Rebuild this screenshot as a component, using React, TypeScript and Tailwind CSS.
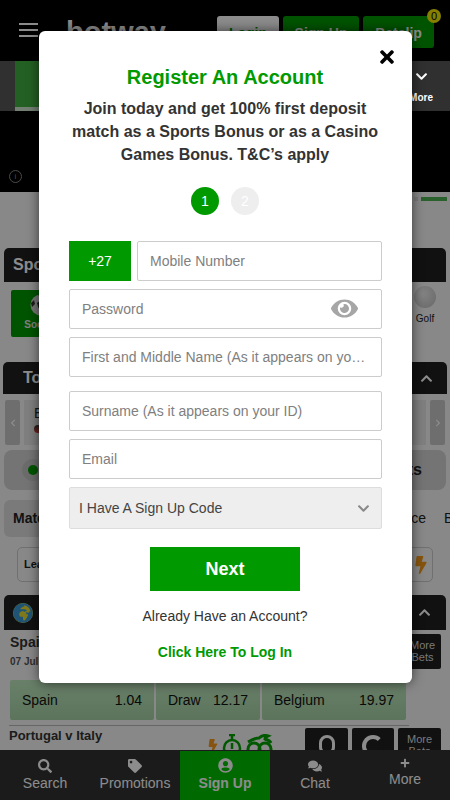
import { FaComments, FaEye, FaSearch, FaTag, FaTimes, FaUserCircle, FaGlobeAfrica, FaBolt, FaChevronLeft, FaChevronRight, FaChevronUp, FaChevronDown, FaPlus } from "react-icons/fa";

const OddsCell = ({ name, price, className }: { name: string; price: string; className: string }) => (
  <div className={`flex items-center justify-between h-[40px] px-[12px] rounded-[2px] bg-linear-to-b from-[#bfe8bf] to-[#a8d4a8] text-[14px] text-[#111] ${className}`}>
    <span>{name}</span>
    <span>{price}</span>
  </div>
);

const NavItem = ({ icon, label }: { icon: React.ReactNode; label: string }) => (
  <div className="flex-1 flex flex-col items-center justify-center text-white text-[14px] leading-[17px] gap-[2px]">
    <span className="h-[14px] text-[14px]">{icon}</span>
    <span>{label}</span>
  </div>
);

const fieldClass =
  "w-full h-[40px] border border-[#ccc] rounded-[2px] px-[12px] text-[14px] text-[#333] bg-white text-ellipsis outline-none placeholder:text-[#808080]";

export default function App() {
  return (
    <div className="relative w-[450px] h-[800px] overflow-hidden flex flex-col bg-[#f8f8f8] font-['Liberation_Sans',Arial,sans-serif]">
      {/* header */}
      <div className="h-[61px] shrink-0 bg-black flex items-start">
        <div className="w-[19px] ml-[19px] mt-[23px] flex flex-col gap-[4px]">
          <div className="h-[2px] bg-white" />
          <div className="h-[2px] bg-white" />
          <div className="h-[2px] bg-white" />
        </div>
        <div className="ml-[28px] mt-[15px] text-[29px] leading-[34px] font-bold text-white w-[115px]">botway</div>
        <div className="ml-[36px] mt-[16px] w-[62px] h-[32px] pt-[2px] rounded-[3px] bg-white text-[#009a00] font-bold text-[14px] flex items-center justify-center">Login</div>
        <div className="ml-[4px] mt-[16px] w-[76px] h-[32px] pt-[2px] rounded-[3px] bg-[#009a00] text-white font-bold text-[14px] flex items-center justify-center">Sign Up</div>
        <div className="relative ml-[4px] mt-[16px] w-[71px] h-[32px] pt-[2px] rounded-[3px] bg-[#009a00] text-white font-bold text-[14px] flex items-center justify-center">
          Betslip
          <span className="absolute -top-[7px] -right-[7px] w-[14px] h-[14px] rounded-full bg-[#f5e800] text-black text-[11px] leading-[14px] text-center font-normal">0</span>
        </div>
      </div>

      {/* sports strip */}
      <div className="h-[50px] shrink-0 bg-[#585858] flex">
        <div className="ml-[15px] w-[60px] flex flex-col">
          <div className="flex-1 bg-[#40b040]" />
          <div className="h-[4px] bg-[#cfe8cf]" />
        </div>
        <div className="relative z-10 ml-auto mr-[9px] w-[40px] flex flex-col items-center pt-[9px] text-white">
          <FaChevronDown className="text-[13px]" />
          <span className="text-[10px] font-bold mt-[7px]">More</span>
        </div>
      </div>

      {/* banner */}
      <div className="h-[81px] shrink-0 bg-black flex items-end px-[9px] pb-[9px]">
        <div className="w-[13px] h-[13px] rounded-full border border-[#888] flex items-center justify-center text-[8px] text-[#888]">i</div>
      </div>

      {/* page */}
      <div className="flex-1 min-h-0 overflow-hidden">
        <div className="h-[56px] flex justify-end items-start pr-[3px] pt-[5px] gap-[3px]">
          <div className="w-[4px] h-[4px] bg-[#e0e0e0]" />
          <div className="w-[26px] h-[4px] bg-[#4caf50]" />
        </div>

        {/* sports */}
        <div className="mx-[4px] h-[34px] rounded-t-[5px] bg-[#1f1f1f] text-white font-bold text-[16px] leading-[34px] pl-[9px]">Sports</div>
        <div className="h-[80px] pl-[11px] pr-[9px] pt-[8px] flex justify-between items-start">
          <div className="w-[60px] h-[47px] rounded-[2px] bg-[#009a00] flex flex-col items-center pt-[4px]">
            <svg width="22" height="22" viewBox="0 0 22 22">
              <circle cx="11" cy="11" r="10.5" fill="#d8d8d8" />
              <path d="M11 6l4 3-1.5 5h-5L7 9z" fill="#222" />
              <path d="M1 9l3-3 1 4-3 3zM8 1h6l-3 2z" fill="#333" />
            </svg>
            <span className="text-[10px] font-bold text-[#e8e8e8] mt-[1px]">Soccer</span>
          </div>
          <div className="w-[30px] flex flex-col items-center -mt-[4px] mr-[1px]">
            <div className="w-[22px] h-[22px] rounded-full bg-[radial-gradient(circle_at_40%_35%,#f0f0f0,#bdbdbd)]" />
            <span className="text-[10px] text-[#222] mt-[3px]">Golf</span>
          </div>
        </div>

        {/* top bets */}
        <div className="mx-[3px] h-[32px] rounded-t-[5px] bg-[#1f1f1f] flex items-center justify-between pl-[20px] pr-[14px] text-white">
          <span className="font-bold text-[16px]">Top Bets</span>
          <FaChevronUp className="text-[13px]" />
        </div>
        <div className="mx-[5px] mt-[6px] h-[45px] flex gap-[4px]">
          <div className="w-[15px] rounded-[2px] bg-[#c8c8c8] flex items-center justify-center text-white text-[8px]"><FaChevronLeft /></div>
          <div className="flex-1 bg-[#e8e8e8] pl-[10px] pt-[3px] text-[14px] text-[#222]">
            Euro 2020
            <div className="w-[8px] h-[8px] rounded-full bg-linear-to-b from-[#333] to-[#d83030] mt-[1px]" />
          </div>
          <div className="w-[15px] rounded-[2px] bg-[#c8c8c8] flex items-center justify-center text-white text-[8px]"><FaChevronRight /></div>
        </div>

        {/* live */}
        <div className="mx-[4px] mt-[5px] h-[40px] rounded-[8px] bg-[#d4d4d4] flex items-center justify-between pl-[18px] pr-[24px]">
          <div className="w-[22px] h-[22px] rounded-full bg-[#c4c4c4] flex items-center justify-center">
            <div className="w-[10px] h-[10px] rounded-full bg-[#009a00]" />
          </div>
          <span className="font-bold text-[16px] text-[#222]">Live Events</span>
        </div>

        {/* tabs */}
        <div className="ml-[4px] -mr-[10px] mt-[10px] h-[37px] flex items-center text-[14px] text-[#222]">
          <div className="w-[110px] h-[37px] rounded-[6px] bg-[#dedede] pl-[9px] leading-[37px] font-bold">Match Result</div>
          <span className="ml-auto">Price</span>
          <span className="ml-[18px] w-[16px]">Bet</span>
        </div>

        {/* league filter */}
        <div className="mx-[17px] mt-[10px] h-[35px] rounded-[5px] border border-[#ccc] flex items-center justify-between pl-[6px] pr-[2px] text-[11px] font-bold text-[#222]">
          <span>League</span>
          <FaBolt className="text-[18px] text-[#f59a1a]" />
        </div>

        {/* matches */}
        <div className="mx-[4px] mt-[13px] h-[35px] rounded-t-[5px] bg-[#1f1f1f] flex items-center justify-between pl-[9px] pr-[15px] text-white">
          <span className="w-[20px] h-[20px] rounded-full bg-[#e6dc30] flex">
            <FaGlobeAfrica className="text-[20px] text-[#3a9ad9]" />
          </span>
          <FaChevronUp className="text-[13px]" />
        </div>
        <div className="relative h-[50px] pl-[10px] pt-[4px]">
          <div className="font-bold text-[14px] leading-[16px] text-[#333]">Spain v Belgium</div>
          <div className="text-[10px] leading-[12px] mt-[6px] font-bold text-[#555]">07 Jul</div>
          <div className="absolute right-[9px] top-[4px] w-[37px] h-[35px] rounded-[2px] bg-[#1f1f1f] text-[#ddd] text-[11px] leading-[12px] text-center pt-[5px]">More Bets</div>
        </div>
        <div className="ml-[10px] w-[396px] flex gap-[2px]">
          <OddsCell name="Spain" price="1.04" className="w-[144px]" />
          <OddsCell name="Draw" price="12.17" className="w-[104px]" />
          <OddsCell name="Belgium" price="19.97" className="w-[144px]" />
        </div>
        <div className="ml-[9px] w-[400px] mt-[5px] border-t border-[#bbb]" />
        <div className="pl-[9px] pr-[9px] pt-[2px] flex items-start">
          <span className="font-bold text-[13px] leading-[16px] text-[#333]">Portugal v Italy</span>
          <FaBolt className="ml-auto mt-[11px] text-[14px] text-[#f59a1a]" />
          <svg className="ml-[2px] mt-[6px]" width="20" height="24" viewBox="0 0 20 24" fill="none" stroke="#00a000" strokeWidth="2.5">
            <path d="M7 1h6M10 1v4" />
            <circle cx="10" cy="14" r="8" />
            <path d="M10 9v6" />
          </svg>
          <svg className="ml-[3px] mt-[6px]" width="28" height="24" viewBox="0 0 28 24" fill="none" stroke="#00a000" strokeWidth="3">
            <path d="M3 8c5-3 9-4 11-4 3-3 6-3 9-2-2 1-3 2-3 3 3 1 5 2 6 4" />
            <circle cx="9" cy="15" r="6" />
            <circle cx="20" cy="15" r="6" />
          </svg>
          <div className="ml-[32px] w-[43px] h-[40px] rounded-[2px] bg-[#1f1f1f] flex justify-center pt-[7px]">
            <div className="w-[16px] h-[20px] rounded-full border-[3px] border-white" />
          </div>
          <div className="ml-[4px] w-[42px] h-[40px] rounded-[2px] bg-[#1f1f1f] flex justify-center pt-[7px]">
            <div className="w-[22px] h-[22px] rounded-full border-[4px] border-white border-r-[#1f1f1f]" />
          </div>
          <div className="ml-[4px] w-[43px] h-[40px] rounded-[2px] bg-[#1f1f1f] text-[#ddd] text-[11px] leading-[12px] text-center pt-[5px] px-[8px]">More Bets</div>
        </div>
      </div>

      {/* bottom nav */}
      <div className="h-[50px] shrink-0 bg-[#323232] flex">
        <NavItem icon={<FaSearch />} label="Search" />
        <NavItem icon={<FaTag />} label="Promotions" />
        <div className="flex-1 flex flex-col items-center justify-center mt-[1px] pb-[1px] bg-[#00c000] text-white text-[14px] leading-[17px] font-bold gap-[2px]">
          <FaUserCircle className="text-[15px]" />
          <span>Sign Up</span>
        </div>
        <NavItem icon={<FaComments />} label="Chat" />
        <div className="flex-1 flex flex-col items-center justify-center text-white text-[14px] leading-[17px] pb-[4px] gap-[3px]">
          <FaPlus className="text-[10px]" />
          <span>More</span>
        </div>
      </div>

      {/* overlay */}
      <div className="absolute inset-0 bg-black/[.45]" />

      {/* register modal */}
      <div className="absolute z-20 left-[39px] top-[31px] w-[373px] h-[652px] pr-[1px] rounded-[6px] bg-white shadow-[0_0_12px_rgba(0,0,0,0.6)] flex flex-col items-center">
        <FaTimes className="absolute right-[15px] top-[16px] text-[20px] text-black" />
        <h2 className="mt-[33px] text-[20px] leading-[26px] font-bold text-[#009a00]">Register An Account</h2>
        <p className="mt-[7px] w-[330px] text-center text-[16px] leading-[23px] font-bold text-[#333]">
          Join today and get 100% first deposit match as a Sports Bonus or as a Casino Games Bonus. T&amp;C’s apply
        </p>
        <div className="mt-[21px] flex gap-[12px]">
          <div className="w-[28px] h-[28px] rounded-full bg-[#009a00] text-white text-[14px] leading-[28px] text-center">1</div>
          <div className="w-[28px] h-[28px] rounded-full bg-[#eee] text-white text-[14px] leading-[28px] text-center">2</div>
        </div>
        <div className="mt-[26px] ml-[1px] w-[313px] flex flex-col">
          <div className="flex gap-[6px]">
            <div className="w-[62px] h-[40px] shrink-0 bg-[#009a00] text-white text-[14px] flex items-center justify-center">+27</div>
            <input className={fieldClass} placeholder="Mobile Number" />
          </div>
          <div className="relative mt-[8px]">
            <input className={fieldClass} placeholder="Password" />
            <FaEye className="absolute right-[24px] top-[6px] text-[27px] text-[#a6a6a6]" />
          </div>
          <input className={`${fieldClass} mt-[8px]`} placeholder="First and Middle Name (As it appears on your ID)" />
          <input className={`${fieldClass} mt-[14px]`} placeholder="Surname (As it appears on your ID)" />
          <input className={`${fieldClass} mt-[8px]`} placeholder="Email" />
          <div className="mt-[8px] h-[42px] rounded-[2px] border border-[#ddd] bg-[#eee] flex items-center justify-between pl-[9px] pr-[11px] text-[14px] text-[#444]">
            <span>I Have A Sign Up Code</span>
            <FaChevronDown className="text-[13px] text-[#888]" />
          </div>
        </div>
        <button className="mt-[18px] w-[150px] h-[44px] bg-[#009a00] text-white text-[18px] font-bold">Next</button>
        <div className="mt-[16px] text-[14px] leading-[18px] text-[#333]">Already Have an Account?</div>
        <div className="mt-[18px] text-[14px] leading-[18px] font-bold text-[#009a00]">Click Here To Log In</div>
      </div>
    </div>
  );
}
